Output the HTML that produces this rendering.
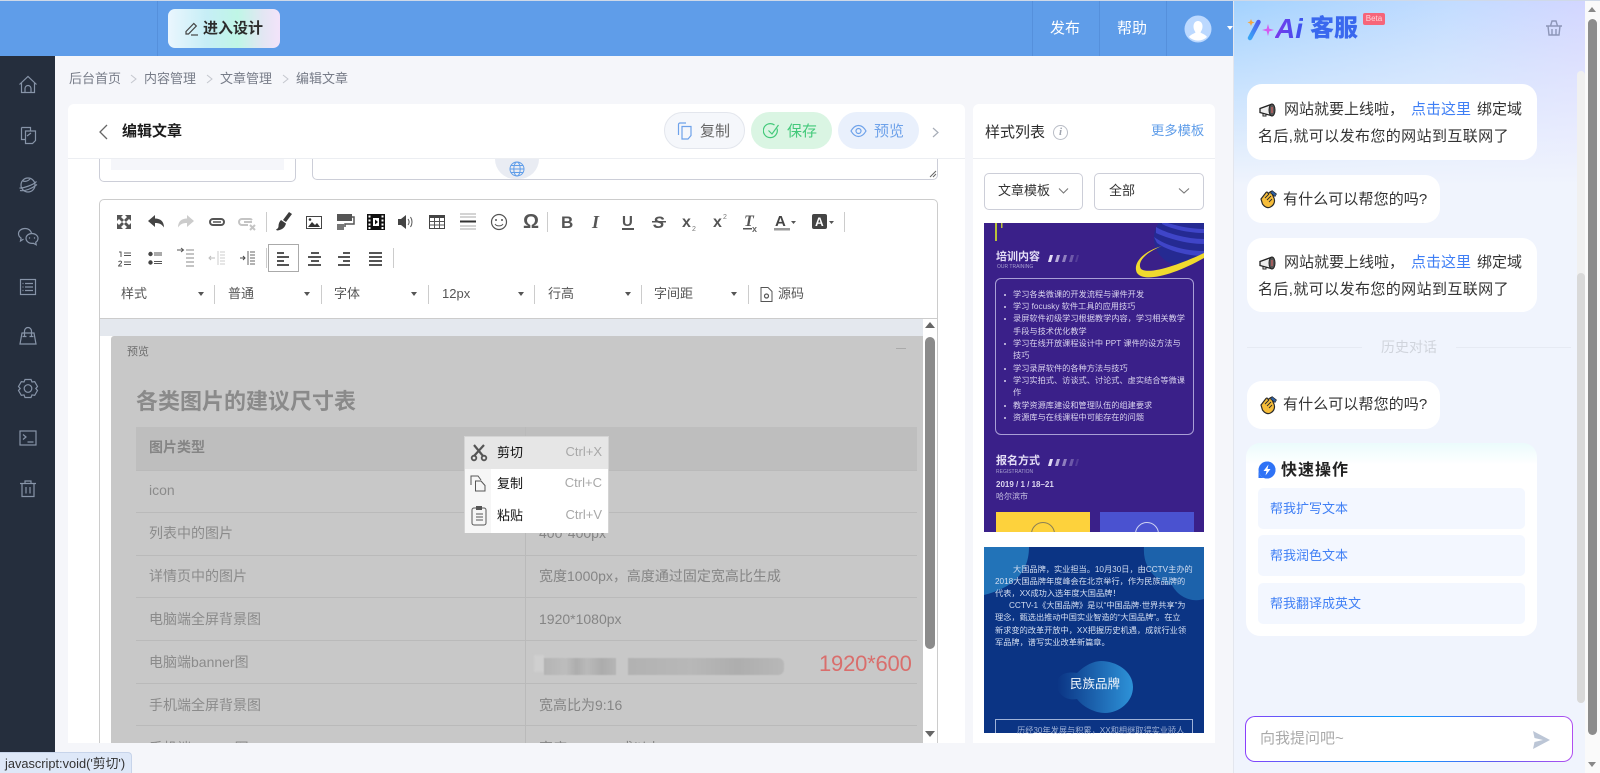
<!DOCTYPE html>
<html lang="zh"><head><meta charset="utf-8"><title>编辑文章</title>
<style>
*{box-sizing:border-box}
html,body{margin:0;padding:0;width:1600px;height:773px;overflow:hidden;background:#f5f6fa;font-family:"Liberation Sans","Noto Sans CJK SC",sans-serif;color:#333}
.a{position:absolute}
.t{position:absolute;white-space:nowrap}
.sep{position:absolute;width:1px;background:#ccc}
.car{position:absolute;width:0;height:0;border:3px solid transparent;border-top:4px solid #555;border-bottom:0}
.tb{position:absolute;font-size:13px;line-height:20px;color:#555;white-space:nowrap}
.pill{position:absolute;top:112px;height:37px;border-radius:19px}
.sel{position:absolute;top:173px;height:37px;border:1px solid #ccced8;border-radius:5px;background:#fff}
.row{position:absolute;left:136px;width:781px;height:1px;background:#bababa}
.l{position:absolute;left:149px;font-size:14px;line-height:20px;color:#8b8b8b;white-space:nowrap}
.r{position:absolute;left:539px;font-size:14px;line-height:20px;color:#858585;white-space:nowrap}
.bub{position:absolute;left:1247px;background:#fff;border-radius:15px}
.bt{position:absolute;font-size:15px;line-height:27px;color:#333;white-space:nowrap}
.qi{position:absolute;left:1258px;width:267px;height:41px;background:#f3f7ff;border-radius:5px;font-size:13px;line-height:41px;color:#3f7ff5;padding-left:12px}
.m{position:absolute;left:497px;font-size:13px;line-height:18px;color:#111}
.k{position:absolute;right:0;font-size:13px;line-height:18px;color:#a8a8a8}
.li{position:absolute;left:1013px;font-size:8.2px;line-height:12px;color:#d9d3ee;white-space:nowrap}
.p{position:absolute;left:995px;font-size:8.2px;line-height:12.3px;color:#d5dff2;white-space:nowrap}
</style></head><body>

<!-- top line + header -->
<div class="a" style="left:0;top:0;width:1600px;height:1px;background:#cfd9e8"></div>
<div class="a" style="left:0;top:1px;width:1233px;height:55px;background:#5f9de9"></div>
<div class="a" style="left:157px;top:1px;width:1px;height:55px;background:#5590dc"></div>
<div class="a" style="left:1032px;top:1px;width:1px;height:55px;background:#5590dc"></div>
<div class="a" style="left:1099px;top:1px;width:1px;height:55px;background:#5590dc"></div>
<div class="a" style="left:1166px;top:1px;width:1px;height:55px;background:#5590dc"></div>
<div class="a" style="left:168px;top:9px;width:112px;height:39px;border-radius:7px;background:linear-gradient(90deg,#eaf6fe 0%,#c6eef6 35%,#bff6e6 62%,#e3e6f3 85%,#f3e3fa 100%)"></div>
<svg class="a" style="left:184px;top:21px" width="15" height="15" viewBox="0 0 15 15" fill="none" stroke="#444" stroke-width="1.2"><path d="M2 10.5 9.800 2.500l2.500 2.500-7.800 8H2z"/><path d="M7 14h7"/></svg>
<div class="t" style="left:203px;top:18px;font-size:15px;line-height:22px;font-weight:700;color:#2c2c2c">进入设计</div>
<div class="t" style="left:1050px;top:18px;font-size:15px;line-height:22px;color:#fff">发布</div>
<div class="t" style="left:1117px;top:18px;font-size:15px;line-height:22px;color:#fff">帮助</div>
<svg class="a" style="left:1184px;top:15px" width="28" height="28" viewBox="0 0 28 28"><circle cx="14" cy="14" r="13.500" fill="#bcd9ff"/><path d="M14 6c3 0 4.500 2.500 4.500 5.500S17 16 16.500 17.500c2 1.500 5 2 6.500 4.500a13 13 0 0 1-18 0c1.500-2.500 4.500-3 6.500-4.500C11 16 9.500 14.500 9.500 11.500S11 6 14 6z" fill="#fff"/></svg>
<div class="a" style="left:1227px;top:26px;border:3.500px solid transparent;border-top:4px solid #fff;border-bottom:0"></div>

<!-- sidebar -->
<div class="a" style="left:0;top:56px;width:55px;height:717px;background:#252e3d"></div>
<svg class="a" style="left:0;top:56px" width="55" height="460" viewBox="0 56 55 460" fill="none" stroke="#8794a8" stroke-width="1.200">
<path d="M19.500 84.500 28 76.500l8.500 8M21.500 83v9.500h13V83M25 92.500v-4a3 3 0 0 1 6 0v4"/>
<path d="M21.500 127.500h9v3M21.500 127.500v12h4M25.500 131h10v9.500l-3 3h-7zM27 136l4-3"/>
<circle cx="28" cy="185" r="7"/><path d="M19.500 188c3 .5 14-3 17-6.500M20 190.500c5 1 12-2 17-6M23 181c3 1 5 0 7-2"/>
<path d="M31.500 233.500c-.5-3-3-5-6.500-5-3.600 0-6.500 2.300-6.500 5.300 0 1.800 1 3.300 2.600 4.300l-.6 2.900 3-1.900"/>
<path d="M32 233.500c3.300 0 6 2.200 6 4.900 0 1.600-.9 3-2.300 3.900l.5 2.500-2.800-1.500c-.4.100-.9.100-1.400.1-3.300 0-6-2.200-6-5s2.700-4.900 6-4.900z" fill="#252e3d"/>
<circle cx="29.500" cy="238" r=".7" fill="#8794a8" stroke="none"/><circle cx="34.500" cy="238" r=".7" fill="#8794a8" stroke="none"/>
<rect x="20.500" y="279.500" width="15" height="15"/><path d="M25 283.500h8M25 287h8M25 290.500h8M22.500 283.500h1M22.500 287h1M22.500 290.500h1"/>
<path d="M22 333h12l2 11H20zM24.500 337v-6a3.500 3.500 0 0 1 7 0v6"/><path d="M22.500 336.500h4M29.500 336.500h4"/>
<path d="M25 380.500h6l1 2.500 2.700-.3 2.800 4.800-1.700 2 1.700 2-2.800 4.800-2.700-.4-1 2.600h-6l-1-2.600-2.700.4-2.800-4.800 1.700-2-1.700-2 2.800-4.800 2.700.3z" transform="translate(0,-1)"/><circle cx="28" cy="388.500" r="3.800"/>
<rect x="20" y="431" width="16" height="14"/><path d="M23 434.500l3 2.500-3 2.500M27.500 442h6"/>
<path d="M20 483.500h16M25 483v-2h6v2M22 484v12.500h12V484M26 487v6.500M30 487v6.500"/>
</svg>

<!-- breadcrumb -->
<div class="t" style="left:69px;top:69px;font-size:13px;line-height:20px;color:#777c88">后台首页</div>
<div class="t" style="left:144px;top:69px;font-size:13px;line-height:20px;color:#777c88">内容管理</div>
<div class="t" style="left:220px;top:69px;font-size:13px;line-height:20px;color:#777c88">文章管理</div>
<div class="t" style="left:296px;top:69px;font-size:13px;line-height:20px;color:#777c88">编辑文章</div>
<svg class="a" style="left:128px;top:73px" width="190" height="12" fill="none" stroke="#c4c7ce" stroke-width="1"><path d="M3 2l5 4-5 4M79 2l5 4-5 4M155 2l5 4-5 4"/></svg>

<!-- main card -->
<div class="a" style="left:68px;top:104px;width:897px;height:639px;background:#fff;border-radius:6px 6px 0 0"></div>
<div class="a" style="left:68px;top:158px;width:897px;height:1px;background:#eceef2"></div>
<svg class="a" style="left:97px;top:123px" width="12" height="18" fill="none" stroke="#666" stroke-width="1.300"><path d="M10 2 3 9l7 7"/></svg>
<div class="t" style="left:122px;top:121px;font-size:15px;line-height:22px;font-weight:700;color:#1c1c1c">编辑文章</div>

<div class="pill" style="left:664px;width:81px;background:#f5f7fb;border:1px solid #e3e6ed"></div>
<svg class="a" style="left:677px;top:122px" width="16" height="18" fill="none" stroke="#6ea2ea" stroke-width="1.200"><path d="M1.500 13V2.500A1.500 1.500 0 0 1 3 1h6"/><path d="M5 4.500h9v9l-3 3.500H5z"/></svg>
<div class="t" style="left:700px;top:121px;font-size:15px;line-height:22px;color:#666">复制</div>
<div class="pill" style="left:751px;width:81px;background:#daf5e3"></div>
<svg class="a" style="left:763px;top:122px" width="18" height="18" fill="none" stroke="#43c97a" stroke-width="1.200"><path d="M14 6.500A7 7 0 1 1 11.500 3"/><path d="M5.500 8.500 9 12l6.500-9"/></svg>
<div class="t" style="left:787px;top:121px;font-size:15px;line-height:22px;color:#43c97a">保存</div>
<div class="pill" style="left:838px;width:81px;background:#e9f0fc"></div>
<svg class="a" style="left:850px;top:124px" width="17" height="14" fill="none" stroke="#6ea2ea" stroke-width="1.200"><path d="M1 7c2-3.500 4.500-5.500 7.500-5.500S14 3.500 16 7c-2 3.500-4.500 5.500-7.500 5.500S3 10.500 1 7z"/><circle cx="8.500" cy="7" r="2.500"/></svg>
<div class="t" style="left:874px;top:121px;font-size:15px;line-height:22px;color:#6ea2ea">预览</div>
<svg class="a" style="left:931px;top:126px" width="9" height="13" fill="none" stroke="#a7adb8" stroke-width="1.200"><path d="M2 2l5 4.500L2 11"/></svg>

<!-- form remnants -->
<div class="a" style="left:99px;top:159px;width:197px;height:23px;border:1px solid #ccced8;border-top:0;border-radius:0 0 5px 5px"></div>
<div class="a" style="left:111px;top:159px;width:173px;height:11px;background:#f5f6fa"></div>
<div class="a" style="left:312px;top:159px;width:626px;height:21px;border:1px solid #ccced8;border-top:0;border-radius:0 0 5px 5px"></div>
<svg class="a" style="left:929px;top:170px" width="8" height="8" stroke="#666" stroke-width="1"><path d="M1 7 7 1M4 7l3-3"/></svg>
<div class="a" style="left:495px;top:159px;width:44px;height:20px;background:#e9ecf3;border-radius:0 0 22px 22px"></div>
<svg class="a" style="left:509px;top:161px" width="16" height="16" fill="none" stroke="#5f9de9" stroke-width="1"><circle cx="8" cy="8" r="7"/><ellipse cx="8" cy="8" rx="3.200" ry="7"/><path d="M1 8h14M2 4.500h12M2 11.500h12"/></svg>

<!-- editor -->
<div class="a" style="left:99px;top:199px;width:839px;height:560px;border:1px solid #ccc;border-radius:5px 5px 0 0;background:#fff"></div>
<div class="a" style="left:100px;top:318px;width:837px;height:1px;background:#ccc"></div>
<div class="a" style="left:100px;top:319px;width:823px;height:17px;background:#e4e8ee"></div>
<div class="a" style="left:111px;top:336px;width:812px;height:407px;background:#c8c8c8;border-radius:3px 0 0 0"></div>

<div class="sep" style="left:266px;top:212px;height:20px"></div>
<div class="sep" style="left:547px;top:212px;height:20px"></div>
<div class="sep" style="left:844px;top:212px;height:20px"></div>
<div class="sep" style="left:266px;top:248px;height:20px"></div>
<div class="sep" style="left:393px;top:248px;height:20px"></div>
<div class="a" style="left:268px;top:244px;width:31px;height:28px;border:1px solid #aaa"></div>
<div class="sep" style="left:214px;top:285px;height:19px"></div>
<div class="sep" style="left:321px;top:285px;height:19px"></div>
<div class="sep" style="left:428px;top:285px;height:19px"></div>
<div class="sep" style="left:534px;top:285px;height:19px"></div>
<div class="sep" style="left:641px;top:285px;height:19px"></div>
<div class="sep" style="left:748px;top:285px;height:19px"></div>

<svg class="a" style="left:0;top:0;pointer-events:none" width="950" height="320" viewBox="0 0 950 320">
<g fill="#555">
<path d="M117 215h6l-2 2 3 3-2 2-3-3-2 2zM131 215h-6l2 2-3 3 2 2 3-3 2 2zM117 229h6l-2-2 3-3-2-2-3 3-2-2zM131 229h-6l2-2-3-3 2-2 3 3 2-2z"/>
<path d="M148 221l7-6v3.500c5.500 0 9 3 9 9-2.500-3.500-4.500-4.500-9-4.500v4z" fill="#444"/>
<path d="M194 221l-7-6v3.500c-5.500 0-9 3-9 9 2.500-3.500 4.500-4.500 9-4.500v4z" fill="#ccc"/>
</g>
<g fill="none" stroke="#555" stroke-width="2"><rect x="210" y="219" width="14" height="6" rx="3"/></g>
<path d="M213 222h8" stroke="#555" stroke-width="1.500"/>
<g fill="none" stroke="#c4c4c4" stroke-width="2"><path d="M248 225h-6a3 3 0 0 1 0-6h8a3 3 0 0 1 2 1"/><path d="M244 222h8M250 225l5 5M255 225l-5 5"/></g>
<path d="M289 212l3 2-6 8-3-2zM281 220l5 3.500c-1 4-4 6.500-9 7l-1-1c2-1 2.500-2 2.500-3.500 0-2.500 1-4.500 2.500-6z" fill="#3c3c3c"/>
<rect x="306.500" y="216.500" width="15" height="12" fill="#fff" stroke="#444"/><path d="M308 227l4-5 3 3 2-2 3 4z" fill="#333"/><circle cx="310" cy="219.500" r="1.300" fill="#333"/>
<rect x="337" y="214" width="15" height="7" fill="#555"/><path d="M352 217h2v7h-9v3" fill="none" stroke="#555" stroke-width="1.500"/><rect x="337" y="224" width="7" height="6" fill="#777"/>
<rect x="367" y="214" width="18" height="16" fill="#111"/><rect x="373" y="218" width="6" height="8" fill="#fff"/><path d="M375 219.500l3 2.500-3 2.500z" fill="#111"/>
<g fill="#fff"><rect x="368.500" y="215.500" width="2" height="2"/><rect x="368.500" y="219.500" width="2" height="2"/><rect x="368.500" y="223.500" width="2" height="2"/><rect x="368.500" y="227" width="2" height="2"/><rect x="381.500" y="215.500" width="2" height="2"/><rect x="381.500" y="219.500" width="2" height="2"/><rect x="381.500" y="223.500" width="2" height="2"/><rect x="381.500" y="227" width="2" height="2"/></g>
<path d="M398 219h3l5-4v14l-5-4h-3z" fill="#444"/><path d="M408 219c1.500 2 1.500 4 0 6M410.500 217c2 3 2 7 0 10" fill="none" stroke="#555"/>
<rect x="429.500" y="215.500" width="15" height="13" fill="none" stroke="#444"/><path d="M429 215h16v3h-16z" fill="#444"/><path d="M434.500 218v10M439.500 218v10M430 221.500h14M430 225h14" stroke="#555"/>
<path d="M460 214h16M460 217h16M460 226h16M460 229h16" stroke="#aaa"/><rect x="460" y="220.500" width="16" height="2" fill="#333"/>
<circle cx="499" cy="222" r="7.500" fill="none" stroke="#555" stroke-width="1.200"/><circle cx="496" cy="220" r="1" fill="#555"/><circle cx="502" cy="220" r="1" fill="#555"/><path d="M495 224c1.500 2.500 6.500 2.500 8 0" fill="none" stroke="#555"/>

<!-- row2 -->
<path d="M119 252h2v5M118.500 262c1-1.500 3.500-1 3 .5s-3 2.500-3 3.500h3.500" fill="none" stroke="#555"/><path d="M124 253h7M124 255.500h7M124 262h7M124 264.500h7" stroke="#555"/>
<circle cx="150.500" cy="254" r="2.200" fill="#444"/><circle cx="150.500" cy="262.500" r="2.200" fill="#444"/><path d="M154 253h8M154 255h8M154 261.500h8M154 263.500h8" stroke="#555"/>
<path d="M177 250h6M181 248l2.500 2-2.500 2" stroke="#555" fill="none"/><path d="M186 250h8M186 254h8M186 258h8M186 262h8M186 266h8" stroke="#888"/>
<path d="M210 258h5M211 256l-2 2 2 2" stroke="#bbb" fill="none"/><path d="M218 251v14" stroke="#ccc"/><path d="M220 252h5M220 255h5M220 258h5M220 261h5M220 264h5" stroke="#ccc"/>
<path d="M240 258h5M243 256l2 2-2 2" stroke="#444" fill="none"/><path d="M248 251v14" stroke="#666"/><path d="M250 252h5M250 255h5M250 258h5M250 261h5M250 264h5" stroke="#666"/>
<g fill="#555"><rect x="277" y="252" width="7" height="2"/><rect x="277" y="256" width="12" height="2"/><rect x="277" y="260" width="7" height="2"/><rect x="277" y="264" width="12" height="2"/>
<rect x="311" y="252" width="8" height="2"/><rect x="308" y="256" width="13" height="2"/><rect x="311" y="260" width="8" height="2"/><rect x="308" y="264" width="13" height="2"/>
<rect x="343" y="252" width="7" height="2"/><rect x="338" y="256" width="12" height="2"/><rect x="343" y="260" width="7" height="2"/><rect x="338" y="264" width="12" height="2"/>
<rect x="369" y="252" width="13" height="2"/><rect x="369" y="256" width="13" height="2"/><rect x="369" y="260" width="13" height="2"/><rect x="369" y="264" width="13" height="2"/></g>

<text x="561" y="228" font-family="Liberation Sans" font-weight="700" font-size="17" fill="#555">B</text>
<text x="592" y="228" font-family="Liberation Serif" font-style="italic" font-weight="700" font-size="18" fill="#555">I</text>
<text x="622" y="226" font-family="Liberation Sans" font-weight="700" font-size="15" fill="#555">U</text><rect x="622" y="228" width="12" height="2" fill="#555"/>
<text x="653" y="228" font-family="Liberation Sans" font-style="italic" font-weight="700" font-size="17" fill="#555">S</text><rect x="652" y="221" width="14" height="1.500" fill="#555"/>
<text x="682" y="227" font-family="Liberation Sans" font-weight="700" font-size="16" fill="#555">x</text><text x="692" y="231" font-family="Liberation Sans" font-size="7" fill="#777">2</text>
<text x="713" y="227" font-family="Liberation Sans" font-weight="700" font-size="16" fill="#555">x</text><text x="723" y="219" font-family="Liberation Sans" font-size="7" fill="#777">2</text>
<text x="744" y="226" font-family="Liberation Serif" font-style="italic" font-weight="700" font-size="16" fill="#555">T</text><rect x="743" y="228" width="9" height="1.500" fill="#555"/><text x="752" y="232" font-family="Liberation Sans" font-weight="700" font-size="9" fill="#666">x</text>
<text x="775" y="226" font-family="Liberation Sans" font-weight="700" font-size="15" fill="#444">A</text><rect x="774" y="228" width="16" height="2.500" fill="#999"/>
<path d="M791 221h5l-2.500 3z" fill="#555"/>
<rect x="812" y="214" width="15" height="15" rx="2" fill="#444"/><text x="815" y="226" font-family="Liberation Sans" font-weight="700" font-size="12" fill="#fff">A</text>
<path d="M829 221h5l-2.500 3z" fill="#555"/>
<path d="M761 287.500h7l4 4v10h-11z" fill="none" stroke="#555"/><circle cx="766.500" cy="296" r="2" fill="none" stroke="#555" stroke-width="1.200"/>
</svg>
<div class="t" style="left:523px;top:211px;font-size:20px;line-height:22px;font-weight:700;color:#555;font-family:'Liberation Sans',sans-serif">Ω</div>

<div class="tb" style="left:121px;top:284px">样式</div><div class="car" style="left:198px;top:292px"></div>
<div class="tb" style="left:228px;top:284px">普通</div><div class="car" style="left:304px;top:292px"></div>
<div class="tb" style="left:334px;top:284px">字体</div><div class="car" style="left:411px;top:292px"></div>
<div class="tb" style="left:442px;top:284px">12px</div><div class="car" style="left:518px;top:292px"></div>
<div class="tb" style="left:548px;top:284px">行高</div><div class="car" style="left:625px;top:292px"></div>
<div class="tb" style="left:654px;top:284px">字间距</div><div class="car" style="left:731px;top:292px"></div>
<div class="tb" style="left:778px;top:284px">源码</div>

<!-- gray preview content -->
<div class="a" style="left:0;top:0;width:923px;height:743px;overflow:hidden">
<div class="t" style="left:127px;top:344px;font-size:11px;line-height:16px;color:#6e6e6e">预览</div>
<div class="a" style="left:896px;top:348px;width:10px;height:1px;background:#aaa"></div>
<div class="t" style="left:136px;top:387px;font-size:22px;line-height:30px;font-weight:700;color:#8a8a8a">各类图片的建议尺寸表</div>
<div class="a" style="left:136px;top:427px;width:781px;height:43px;background:#bebebe"></div>
<div class="a" style="left:525px;top:427px;width:1px;height:316px;background:#bababa"></div>
<div class="row" style="top:470px"></div><div class="row" style="top:512px"></div><div class="row" style="top:555px"></div><div class="row" style="top:597px"></div><div class="row" style="top:640px"></div><div class="row" style="top:683px"></div><div class="row" style="top:725px"></div>
<div class="l" style="left:149px;top:437px;font-weight:700;color:#858585">图片类型</div>
<div class="l" style="top:480px">icon</div>
<div class="l" style="top:523px">列表中的图片</div><div class="r" style="top:523px">400*400px</div>
<div class="l" style="top:566px">详情页中的图片</div><div class="r" style="top:566px">宽度1000px，高度通过固定宽高比生成</div>
<div class="l" style="top:609px">电脑端全屏背景图</div><div class="r" style="top:609px">1920*1080px</div>
<div class="l" style="top:652px">电脑端banner图</div>
<div class="a" style="left:534px;top:655px;width:10px;height:17px;background:#cfcfcf;filter:blur(1px)"></div>
<div class="a" style="left:544px;top:658px;width:72px;height:17px;background:linear-gradient(90deg,#b4b4b4,#bdbdbd 30%,#adadad 45%,#bababa 60%,#acacac 80%,#b5b5b5);filter:blur(.6px)"></div>
<div class="a" style="left:628px;top:658px;width:156px;height:17px;background:linear-gradient(90deg,#b2b2b2,#b8b8b8 40%,#aeaeae 70%,#b8b8b8);border-radius:0 6px 6px 0;filter:blur(.6px)"></div>
<div class="t" style="left:819px;top:650px;font-size:22px;line-height:28px;color:#d96e6c;letter-spacing:-.2px">1920*600</div>
<div class="l" style="top:695px">手机端全屏背景图</div><div class="r" style="top:695px">宽高比为9:16</div>
<div class="l" style="top:738px">手机端banner图</div><div class="r" style="top:738px">宽度640px，或以上</div>
</div>

<!-- editor scrollbar -->
<div class="a" style="left:923px;top:319px;width:14px;height:424px;background:#fff"></div>
<div class="a" style="left:925px;top:337px;width:10px;height:312px;background:#8b8b8b;border-radius:5px"></div>
<div class="a" style="left:925px;top:322px;border:5px solid transparent;border-bottom:6px solid #666;border-top:0"></div>
<div class="a" style="left:925px;top:731px;border:5px solid transparent;border-top:6px solid #666;border-bottom:0"></div>

<!-- context menu -->
<div class="a" style="left:464px;top:436px;width:145px;height:97px;background:#fff;border:1px solid #d4d4d4;border-width:1px 1px 0 1px"></div>
<div class="a" style="left:465px;top:468px;width:26px;height:65px;background:#f6f6f6"></div>
<div class="a" style="left:465px;top:437px;width:143px;height:32px;background:#e6e6e6"></div>
<svg class="a" style="left:465px;top:437px" width="28" height="96" fill="none" stroke="#555" stroke-width="1.400">
<path d="M9 8l9 11M19 8 9 19" stroke-width="2.200"/><circle cx="9" cy="21" r="2.300" stroke-width="1.800"/><circle cx="19" cy="21" r="2.300" stroke-width="1.800"/>
<path d="M6 48V39h7l3 4" stroke-width="1"/><path d="M10.500 44H16l4 4.500V54H10.500z" stroke-width="1"/>
<rect x="7" y="71" width="14" height="17" rx="2" stroke-width="1"/><rect x="11" y="69" width="6" height="4" fill="#555" stroke="none"/><path d="M11 77h7M11 80h7M11 83h7" stroke-width="1"/>
</svg>
<div class="m" style="top:444px">剪切</div><div class="k" style="top:443px;right:998px">Ctrl+X</div>
<div class="m" style="top:475px">复制</div><div class="k" style="top:474px;right:998px">Ctrl+C</div>
<div class="m" style="top:507px">粘贴</div><div class="k" style="top:506px;right:998px">Ctrl+V</div>

<!-- mask below card -->
<div class="a" style="left:55px;top:743px;width:1178px;height:30px;background:#f5f6fa"></div>

<!-- right card -->
<div class="a" style="left:973px;top:104px;width:242px;height:639px;background:#fff;border-radius:6px 6px 0 0"></div>
<div class="a" style="left:973px;top:158px;width:242px;height:1px;background:#eceef2"></div>
<div class="t" style="left:985px;top:122px;font-size:15px;line-height:22px;color:#2a2a2a">样式列表</div>
<div class="a" style="left:1053px;top:125px;width:15px;height:15px;border:1px solid #b9bdc6;border-radius:50%;font:italic 700 11px/13px 'Liberation Serif',serif;color:#9fa4ae;text-align:center">i</div>
<div class="t" style="left:1151px;top:121px;font-size:13.300px;line-height:20px;color:#5f9de9">更多模板</div>
<div class="sel" style="left:984px;width:99px"></div><div class="t" style="left:998px;top:181px;font-size:13px;line-height:20px;color:#333">文章模板</div>
<div class="sel" style="left:1094px;width:110px"></div><div class="t" style="left:1109px;top:181px;font-size:13px;line-height:20px;color:#333">全部</div>
<svg class="a" style="left:1058px;top:187px" width="132" height="8" fill="none" stroke="#777" stroke-width="1.100"><path d="M1 1.500 5.500 6 10 1.500M121 1.500 126 6 131 1.500"/></svg>

<!-- template 1 -->
<div class="a" style="left:984px;top:223px;width:220px;height:309px;background:#3a2089;overflow:hidden">
<svg class="a" style="left:0;top:0" width="220" height="70"><path d="M11 0h2v18h-2zM17 0h1.500v5H17z" fill="#b9c23a"/>
<circle cx="198" cy="15" r="28" fill="#252a92"/>
<path d="M172 4c10 6 30 12 48 12v5c-18 0-37-6-48-11zM170 14c12 9 32 14 50 14v5c-16 0-36-5-47-13zM178 -2c10 4 28 8 42 8v4c-15 0-33-4-42-9z" fill="#3f45c8"/>
<path d="M178 23C160 30 153 40 157 46 165 52 195 42 220 30v5C190 52 160 60 153 50 148 40 160 28 178 23z" fill="#f0da2e"/></svg>
<div class="t" style="left:12px;top:27px;font-size:11px;line-height:14px;font-weight:700;color:#e4def6">培训内容</div>
<svg class="a" style="left:62px;top:31px" width="34" height="10" fill="#e4def6"><path d="M2 8 4 1h3L5 8z"/><path d="M9 8l2-7h3l-2 7z" opacity=".75"/><path d="M16 8l2-7h3l-2 7z" opacity=".5"/><path d="M23 8l2-7h3l-2 7z" opacity=".3"/><path d="M29 8l2-7h2l-2 7z" opacity=".15"/></svg>
<div class="t" style="left:13px;top:40px;font-size:5px;line-height:8px;color:#a8a0d0">OUR TRAINING</div>
<div class="a" style="left:11px;top:55px;width:199px;height:157px;border:1px solid #a99fd6;border-radius:6px"></div>
<div class="t" style="left:12px;top:231px;font-size:11px;line-height:14px;font-weight:700;color:#e4def6">报名方式</div>
<svg class="a" style="left:62px;top:235px" width="34" height="10" fill="#e4def6"><path d="M2 8 4 1h3L5 8z"/><path d="M9 8l2-7h3l-2 7z" opacity=".75"/><path d="M16 8l2-7h3l-2 7z" opacity=".5"/><path d="M23 8l2-7h3l-2 7z" opacity=".3"/><path d="M29 8l2-7h2l-2 7z" opacity=".15"/></svg>
<div class="t" style="left:12px;top:245px;font-size:5px;line-height:8px;color:#a8a0d0">REGISTRATION</div>
<div class="t" style="left:12px;top:256px;font-size:8px;line-height:12px;font-weight:700;color:#dcd6f0">2019 / 1 / 18–21</div>
<div class="t" style="left:12px;top:268px;font-size:8px;line-height:12px;color:#c8c2e4">哈尔滨市</div>
<div class="a" style="left:12px;top:289px;width:94px;height:20px;background:#fdd23c"></div>
<div class="a" style="left:116px;top:289px;width:94px;height:20px;background:#4a52d0"></div>
<div class="a" style="left:47px;top:299px;width:24px;height:24px;border:1.500px solid #8a7f55;border-radius:50%"></div>
<div class="a" style="left:151px;top:299px;width:24px;height:24px;border:1.500px solid #cfd3f2;border-radius:50%"></div>
</div>
<div class="li" style="top:289px">学习各类微课的开发流程与课件开发</div>
<div class="li" style="top:301px">学习 focusky 软件工具的应用技巧</div>
<div class="li" style="top:313px">录屏软件初级学习根据教学内容，学习相关教学</div>
<div class="li" style="top:326px">手段与技术优化教学</div>
<div class="li" style="top:338px">学习在线开放课程设计中 PPT 课件的设方法与</div>
<div class="li" style="top:350px">技巧</div>
<div class="li" style="top:363px">学习录屏软件的各种方法与技巧</div>
<div class="li" style="top:375px">学习实拍式、访谈式、讨论式、虚实结合等微课</div>
<div class="li" style="top:387px">作</div>
<div class="li" style="top:400px">教学资源库建设和管理队伍的组建要求</div>
<div class="li" style="top:412px">资源库与在线课程中可能存在的问题</div>
<svg class="a" style="left:1003px;top:290px" width="4" height="134" fill="#d9d3ee"><circle cx="2" cy="5" r="1"/><circle cx="2" cy="17" r="1"/><circle cx="2" cy="29" r="1"/><circle cx="2" cy="54" r="1"/><circle cx="2" cy="79" r="1"/><circle cx="2" cy="91" r="1"/><circle cx="2" cy="116" r="1"/><circle cx="2" cy="128" r="1"/></svg>

<!-- template 2 -->
<div class="a" style="left:984px;top:547px;width:220px;height:186px;background:#0b3484;overflow:hidden">
<svg class="a" style="left:0;top:0" width="220" height="186">
<path d="M0 0h45c0 30-22 42-45 48z" fill="#2273b8"/><path d="M160 0h60v52c-12 4-26-2-32-14-8 0-30-12-28-38z" fill="#1c62ab"/>
<defs><linearGradient id="g1" x1="0" x2="1"><stop offset="0" stop-color="#0b3484"/><stop offset="1" stop-color="#2d92d8"/></linearGradient></defs>
<path d="M73 137c0-9 9-13 20-11 8-8 17-12 24-12 15 0 32 10 32 26 0 15-14 26-28 26-10 0-22-6-28-14-10 2-20-4-20-15z" fill="url(#g1)"/>
<rect x="11.500" y="172.500" width="197" height="30" fill="none" stroke="#9fb2d8"/></svg>
</div>
<div class="p" style="top:564px;left:1013px">大国品牌，实业担当。10月30日，由CCTV主办的</div>
<div class="p" style="top:576px">2018大国品牌年度峰会在北京举行，作为民族品牌的</div>
<div class="p" style="top:588px">代表，XX成功入选年度大国品牌！</div>
<div class="p" style="top:600px;left:1009px">CCTV-1《大国品牌》是以“中国品牌·世界共享”为</div>
<div class="p" style="top:612px">理念，甄选出推动中国实业智造的“大国品牌”。在立</div>
<div class="p" style="top:625px">新求变的改革开放中，XX把握历史机遇，成就行业领</div>
<div class="p" style="top:637px">军品牌，谱写实业改革新篇章。</div>
<div class="t" style="left:1070px;top:675px;font-size:12.500px;line-height:18px;color:#f2f6fc">民族品牌</div>
<div class="p" style="top:725px;left:1017px;color:#9fb2d8">历经30年发展与积累，XX和相继取得实业骄人</div>

<!-- status bar -->
<div class="a" style="left:0;top:752px;width:132px;height:21px;background:#dee8f8;border:1px solid #c7d4ea;border-left:0;border-bottom:0;border-radius:0 4px 0 0"></div>
<div class="t" style="left:5px;top:755px;font-size:12.800px;line-height:17px;color:#333">javascript:void('剪切')</div>

<!-- AI panel -->
<div class="a" style="left:1233px;top:1px;width:352px;height:772px;background:linear-gradient(180deg,rgba(240,244,253,0) 0,rgba(240,244,253,.35) 60px,#f0f4fd 185px),linear-gradient(100deg,#a3d2fe 0%,#c2dcff 45%,#e3d0ff 100%);border-left:1px solid #e3e6ee"></div>
<svg class="a" style="left:1247px;top:16px" width="22" height="26"><defs><linearGradient id="wand" x1="0" y1="1" x2="1" y2="0"><stop offset="0" stop-color="#38a4f5"/><stop offset="1" stop-color="#4d5df0"/></linearGradient></defs><path d="M3 22 11.500 6" stroke="url(#wand)" stroke-width="4.500" stroke-linecap="round"/><path d="M4 3l1 2.500L7.500 6.500 5 7.500 4 10 3 7.500.5 6.500 3 5.500z" fill="#f7a63e"/></svg>
<svg class="a" style="left:1262px;top:23px" width="12" height="14"><path d="M6 1l1.300 4.700L12 7 7.300 8.300 6 13 4.700 8.300 0 7l4.700-1.300z" fill="#d45cf0"/></svg>
<div class="t" style="left:1275px;top:12px;font-size:28px;line-height:34px;font-weight:700;font-style:italic;color:#4a3fe0;background:linear-gradient(90deg,#7a38ec,#3a55ee);-webkit-background-clip:text;background-clip:text;-webkit-text-fill-color:transparent">Ai</div>
<div class="t" style="left:1310px;top:13px;font-size:24px;line-height:32px;font-weight:900;color:#3a68ee">客服</div>
<div class="a" style="left:1363px;top:13px;width:22px;height:12px;background:#f6657a;border-radius:2px;font-size:8px;line-height:12px;color:#ffd4da;text-align:center">Beta</div>
<svg class="a" style="left:1545px;top:19px" width="18" height="17" fill="none" stroke="#8d96b8" stroke-width="1.400"><path d="M1 7h16M3 7l1 9h10l1-9M5.500 7 7 2h4l1.500 5M7 10v6M11 10v6"/></svg>

<div class="bub" style="top:84px;width:290px;height:76px"></div>
<svg class="a" style="left:1259px;top:103px" width="18" height="15"><path d="M1 5.500l11-4v11l-11-3z" fill="#eee" stroke="#222" stroke-width="1.300"/><ellipse cx="13" cy="7" rx="3" ry="6" fill="#555" stroke="#222"/><path d="M4 10v3h3v-2" fill="none" stroke="#222"/><path d="M13 4v6" stroke="#e66"/></svg>
<div class="bt" style="left:1284px;top:96px">网站就要上线啦，</div><div class="bt" style="left:1411px;top:96px;color:#3f7ff5">点击这里</div><div class="bt" style="left:1477px;top:96px">绑定域</div>
<div class="bt" style="left:1258px;top:123px;letter-spacing:.4px">名后,就可以发布您的网站到互联网了</div>

<div class="bub" style="top:175px;width:193px;height:48px"></div>
<svg class="a" style="left:1259px;top:190px" width="19" height="19"><path d="M2 9 7 2.500c1-1 2.500 0 2 1.500L11 2c1-1 2.500 0 2 1.500l1.500 3.500c2 3.500 1 8-3 10-3 1.500-6 0-8-3z" fill="#f6bd3a" stroke="#2a2a2a" stroke-width="1.200"/><path d="M6 8l4-4M8 10l4-4M10 12l3-3" stroke="#2a2a2a" stroke-width=".9"/><path d="M13 .5l4.500 3.500-1.500 2.500-4.500-3.500z" fill="#2f5fa0" stroke="#222" stroke-width=".6"/></svg>
<div class="bt" style="left:1283px;top:186px;letter-spacing:.1px">有什么可以帮您的吗?</div>

<div class="bub" style="top:238px;width:290px;height:74px"></div>
<svg class="a" style="left:1259px;top:256px" width="18" height="15"><path d="M1 5.500l11-4v11l-11-3z" fill="#eee" stroke="#222" stroke-width="1.300"/><ellipse cx="13" cy="7" rx="3" ry="6" fill="#555" stroke="#222"/><path d="M4 10v3h3v-2" fill="none" stroke="#222"/><path d="M13 4v6" stroke="#e66"/></svg>
<div class="bt" style="left:1284px;top:249px">网站就要上线啦，</div><div class="bt" style="left:1411px;top:249px;color:#3f7ff5">点击这里</div><div class="bt" style="left:1477px;top:249px">绑定域</div>
<div class="bt" style="left:1258px;top:276px;letter-spacing:.4px">名后,就可以发布您的网站到互联网了</div>

<div class="a" style="left:1247px;top:347px;width:324px;height:1px;background:#e6eaf3"></div>
<div class="a" style="left:1362px;top:336px;width:94px;height:22px;background:#f0f4fd;text-align:center;font-size:14px;line-height:22px;color:#d0d4dc">历史对话</div>

<div class="bub" style="top:381px;width:193px;height:48px"></div>
<svg class="a" style="left:1259px;top:396px" width="19" height="19"><path d="M2 9 7 2.500c1-1 2.500 0 2 1.500L11 2c1-1 2.500 0 2 1.500l1.500 3.500c2 3.500 1 8-3 10-3 1.500-6 0-8-3z" fill="#f6bd3a" stroke="#2a2a2a" stroke-width="1.200"/><path d="M6 8l4-4M8 10l4-4M10 12l3-3" stroke="#2a2a2a" stroke-width=".9"/><path d="M13 .5l4.500 3.500-1.500 2.500-4.500-3.500z" fill="#2f5fa0" stroke="#222" stroke-width=".6"/></svg>
<div class="bt" style="left:1283px;top:391px;letter-spacing:.1px">有什么可以帮您的吗?</div>

<div class="a" style="left:1246px;top:443px;width:291px;height:193px;border-radius:14px;background:linear-gradient(180deg,#ebfbfc 0,#fff 22px)"></div>
<svg class="a" style="left:1258px;top:461px" width="18" height="18"><path d="M9 .5a8.500 8.500 0 1 1-8.500 8.500V17H9z" fill="#2f73f6"/><circle cx="9" cy="9" r="8.500" fill="#2f73f6"/><path d="M10.500 3.500 5.500 10h3l-1 4.500L12.500 8h-3z" fill="#fff"/></svg>
<div class="t" style="left:1281px;top:459px;font-size:16px;line-height:23px;font-weight:700;letter-spacing:1px;color:#222">快速操作</div>
<div class="qi" style="top:488px">帮我扩写文本</div>
<div class="qi" style="top:535px">帮我润色文本</div>
<div class="qi" style="top:583px">帮我翻译成英文</div>

<div class="a" style="left:1245px;top:716px;width:328px;height:46px;border-radius:10px;padding:1px;background:linear-gradient(90deg,#8a3ffc,#2c7cf6 25%,#0aa0ff 50%,#5a5cf0 75%,#b04ff0)"><div style="width:100%;height:100%;background:#fff;border-radius:9px"></div></div>
<div class="t" style="left:1260px;top:728px;font-size:15px;line-height:22px;color:#a9a9a9">向我提问吧~</div>
<svg class="a" style="left:1533px;top:730px" width="18" height="20"><path d="M0 1 17 10 0 19l1.500-7L10 10l-8.500-2z" fill="#bcc6d6"/></svg>

<!-- panel inner scroll -->
<div class="a" style="left:1577px;top:71px;width:8px;height:632px;background:#f0f0f0;border-radius:4px"></div>
<div class="a" style="left:1577px;top:273px;width:8px;height:430px;background:#d9d9d9;border-radius:4px"></div>

<!-- page scrollbar -->
<div class="a" style="left:1585px;top:1px;width:15px;height:772px;background:#fafafa"></div>
<div class="a" style="left:1588px;top:19px;width:9px;height:716px;background:#8c8c8c;border-radius:5px"></div>
<div class="a" style="left:1588px;top:7px;border:4.500px solid transparent;border-bottom:5px solid #888;border-top:0"></div>
<div class="a" style="left:1588px;top:762px;border:4.500px solid transparent;border-top:5px solid #888;border-bottom:0"></div>
</body></html>
